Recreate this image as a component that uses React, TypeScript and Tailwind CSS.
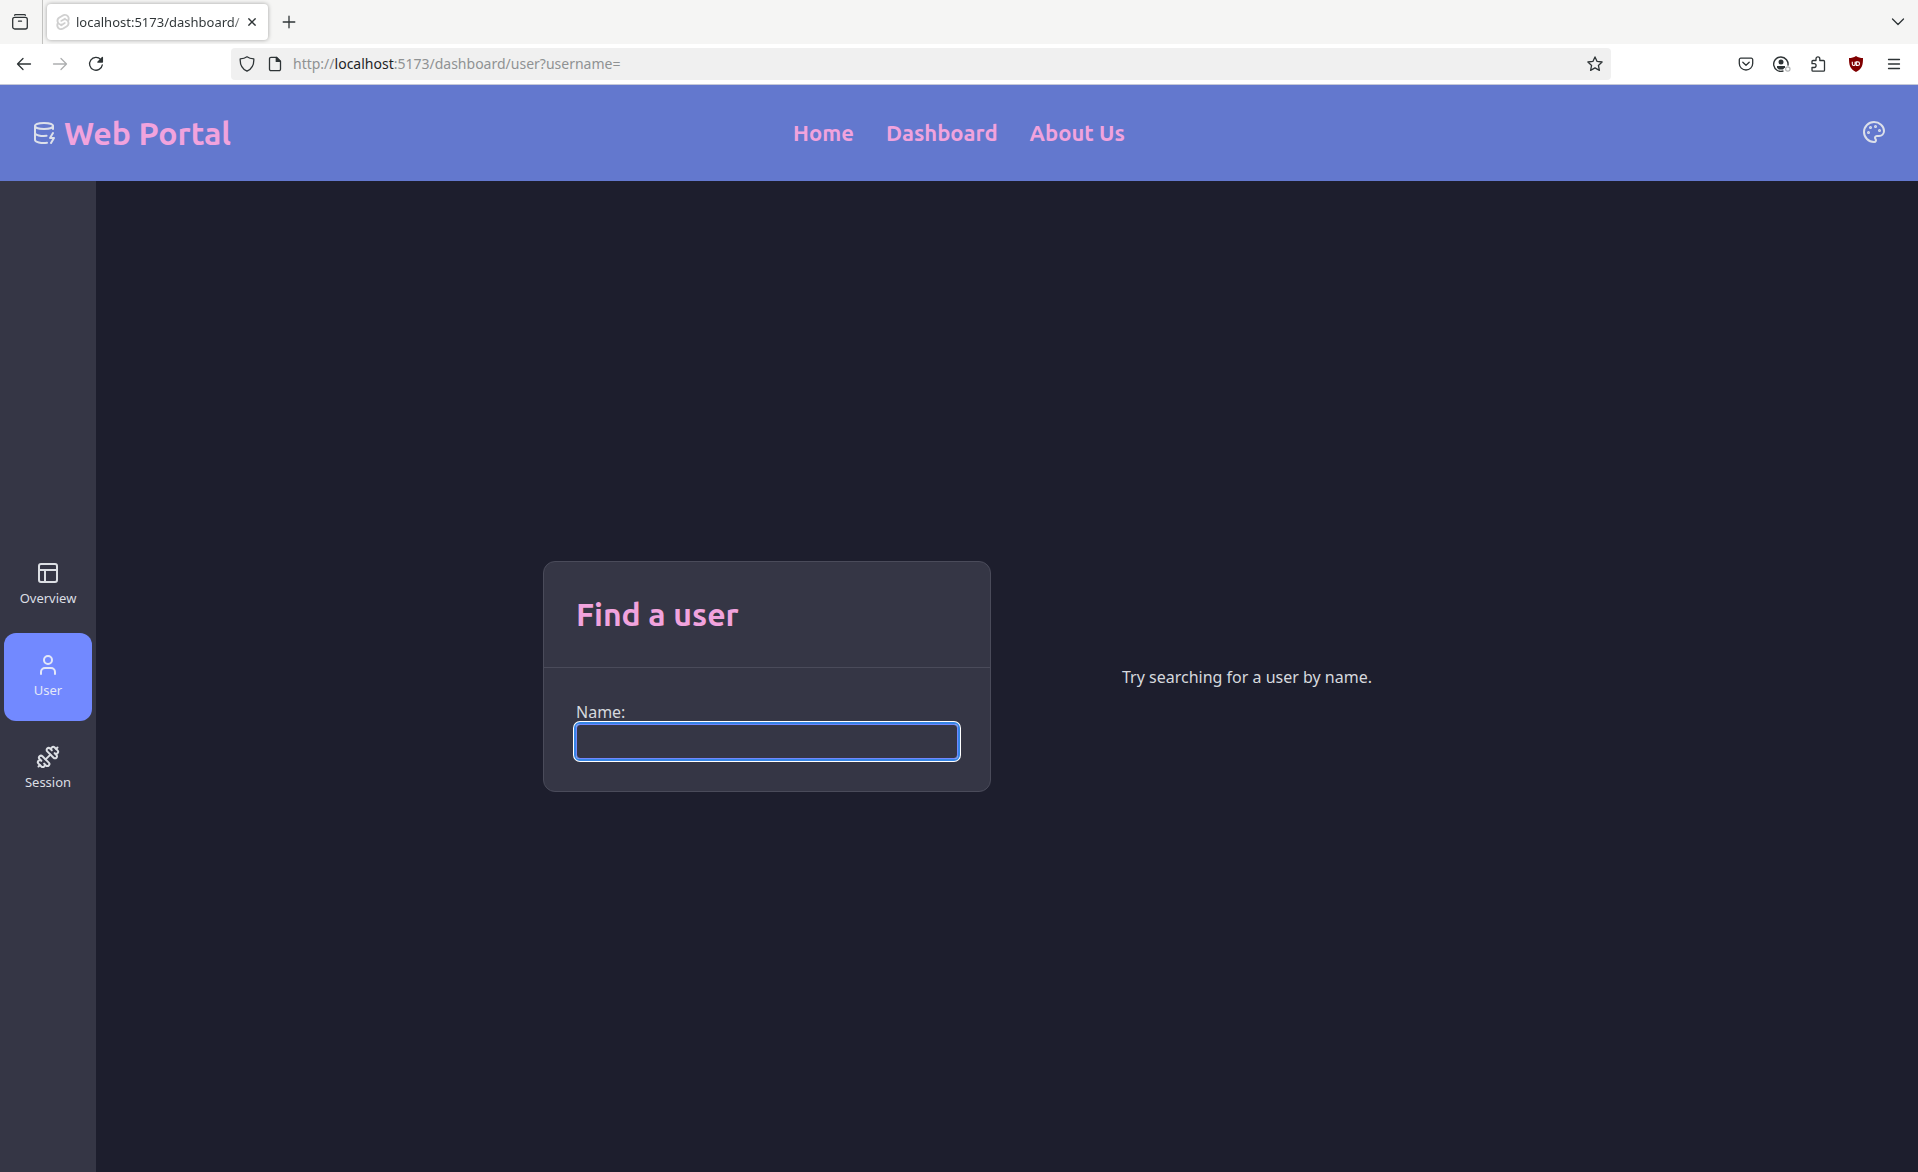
import type { ReactNode } from "react";
import { DatabaseZap, Dumbbell, Palette, PanelsTopLeft, User } from "lucide-react";

const uiFont = "font-['Noto_Sans',sans-serif]";
const headingFont = "font-['Ubuntu','Noto_Sans',sans-serif]";

function Glyph({ children, className = "" }: { children: ReactNode; className?: string }) {
  return (
    <svg
      viewBox="0 0 16 16"
      className={`size-4 shrink-0 ${className}`}
      fill="none"
      stroke="currentColor"
      strokeWidth="1.3"
      strokeLinecap="round"
      strokeLinejoin="round"
      aria-hidden="true"
    >
      {children}
    </svg>
  );
}

function ChromeButton({ label, children, className = "" }: { label: string; children: ReactNode; className?: string }) {
  return (
    <button type="button" aria-label={label} className={`flex size-8 shrink-0 items-center justify-center rounded ${className}`}>
      {children}
    </button>
  );
}

function TabStrip() {
  return (
    <div className="flex h-11 items-center bg-[#f5f5f4]">
      <div className="flex w-[43px] shrink-0 items-center self-stretch border-r border-[#c2c2c0] pl-1">
        <ChromeButton label="Recent browsing">
          <Glyph>
            <path d="M2.6 1.2 C3 .6 3.5 .6 4 .6 H12 C12.5 .6 13 .6 13.400 1.2" />
            <rect x=".7" y="3.400" width="14.600" height="11.600" rx="2" />
            <path d="M6.500 7.200h3" />
          </Glyph>
        </ChromeButton>
      </div>
      <div className="ml-1 flex h-9 w-[221px] items-center rounded bg-white pr-2 pl-2 shadow-[0_0_4px_rgba(0,0,0,0.35)]">
        <svg viewBox="0 0 98 118" className="mr-[5px] size-4 shrink-0" fill="none" aria-hidden="true">
          <path
            fill="#d0d0d0"
            d="M91.8 15.6C80.9-.1 59.2-4.7 43.6 5.2L16.1 22.8C8.6 27.5 3.4 35.2 1.9 43.9c-1.3 7.3-.2 14.8 3.3 21.3-2.4 3.6-4 7.6-4.7 11.8-1.6 8.9.5 18.1 5.7 25.4 11 15.7 32.6 20.3 48.2 10.4l27.5-17.5c7.5-4.7 12.7-12.4 14.2-21.1 1.3-7.3.2-14.8-3.3-21.3 2.4-3.6 4-7.6 4.7-11.8 1.700-9-.4-18.200-5.700-25.500"
          />
          <path
            fill="#fff"
            d="M40.9 103.9c-8.900 2.300-18.200-1.200-23.400-8.700-3.200-4.400-4.400-9.900-3.500-15.300.2-.9.4-1.700.6-2.600l.5-1.600 1.400 1c3.300 2.400 6.900 4.200 10.800 5.400l1 .3-.1 1c-.1 1.400.3 2.900 1.100 4.100 1.600 2.300 4.400 3.400 7.100 2.700.6-.2 1.200-.4 1.700-.7L65.500 72c1.400-.9 2.300-2.200 2.600-3.800.3-1.600-.1-3.300-1-4.600-1.600-2.300-4.400-3.300-7.100-2.600-.6.2-1.200.4-1.700.7l-10.500 6.700c-1.700 1.100-3.600 1.900-5.600 2.400-8.900 2.300-18.200-1.200-23.400-8.700-3.100-4.400-4.400-9.900-3.400-15.300.9-5.200 4.100-9.900 8.600-12.700l27.500-17.500c1.700-1.100 3.600-1.900 5.600-2.500 8.900-2.300 18.200 1.200 23.400 8.700 3.200 4.400 4.400 9.900 3.500 15.300-.2.9-.4 1.700-.7 2.600l-.5 1.600-1.400-1c-3.300-2.400-6.900-4.200-10.800-5.400l-1-.3.1-1c.1-1.400-.3-2.900-1.100-4.100-1.600-2.300-4.400-3.300-7.100-2.600-.6.2-1.200.4-1.700.7L32.400 46.100c-1.400.9-2.300 2.200-2.600 3.800s.1 3.300 1 4.600c1.600 2.300 4.400 3.300 7.100 2.600.6-.2 1.200-.4 1.700-.7l10.500-6.700c1.700-1.100 3.600-1.900 5.600-2.500 8.900-2.300 18.200 1.200 23.400 8.700 3.200 4.400 4.400 9.900 3.500 15.300-.9 5.200-4.100 9.900-8.600 12.700l-27.500 17.500c-1.700 1.100-3.600 1.900-5.600 2.500"
          />
        </svg>
        <span className="min-w-0 flex-1 bg-gradient-to-r from-[#2e3436] from-93% to-[#2e343640] bg-clip-text text-[13px] leading-5 whitespace-nowrap text-transparent">
          localhost:5173/dashboard/
        </span>
        <button type="button" aria-label="Close tab" className="flex size-4 shrink-0 items-center justify-center">
          <svg viewBox="0 0 8 8" className="size-2" fill="none" stroke="#2e3436" strokeWidth="1.400" aria-hidden="true">
            <path d="M.4 .4 7.600 7.600M7.600 .4 .4 7.600" />
          </svg>
        </button>
      </div>
      <ChromeButton label="New tab" className="ml-[5px]">
        <Glyph>
          <path d="M8 2.200v11.600M2.200 8h11.600" />
        </Glyph>
      </ChromeButton>
      <ChromeButton label="List all tabs" className="mr-1 ml-auto">
        <Glyph>
          <path d="M2.500 5 8 10.500 13.500 5" />
        </Glyph>
      </ChromeButton>
    </div>
  );
}

function Toolbar() {
  return (
    <div className="flex h-[41px] items-center border-b border-[#c5c8d8] bg-white pr-2 pl-2">
      <div className="flex w-[223px] shrink-0 gap-1">
        <ChromeButton label="Back">
          <Glyph>
            <path d="M14.500 8H1.500M7 2.500 1.500 8 7 13.500" />
          </Glyph>
        </ChromeButton>
        <ChromeButton label="Forward" className="text-[#adafb0]">
          <Glyph>
            <path d="M1.500 8h13M9 2.500 14.500 8 9 13.500" />
          </Glyph>
        </ChromeButton>
        <ChromeButton label="Reload">
          <Glyph>
            <path d="M14.300 8.800A6.400 6.400 0 1 1 12.800 3.600" />
            <path d="M14.400 1.500v4.600H9.800Z" fill="currentColor" />
          </Glyph>
        </ChromeButton>
      </div>
      <div className="flex h-8 min-w-0 flex-1 items-center rounded bg-[#f0f0f0] pr-2 pl-2">
        <Glyph>
          <path d="M8 .8C6 2.300 3.800 2.800 1.200 2.900 .9 8.800 3.200 12.900 8 15.200c4.800-2.300 7.100-6.400 6.800-12.300C12.200 2.800 10 2.300 8 .8Z" />
        </Glyph>
        <Glyph className="ml-3">
          <path d="M9.500 1.300H4a1.500 1.500 0 0 0-1.500 1.500v10.400A1.500 1.500 0 0 0 4 14.700h8a1.500 1.500 0 0 0 1.500-1.500V5.300Z" />
          <path d="M9.300 1.500v3.900h4Z" fill="currentColor" />
        </Glyph>
        <p className="ml-2.5 flex-1 truncate text-sm text-[#8f9293]">
          http://<span className="text-[#1e2426]">localhost</span>:5173/dashboard/user?username=
        </p>
        <button type="button" aria-label="Bookmark this page">
          <Glyph>
            <path d="m8 .9 2.100 4.500 5 .6-3.700 3.400 1 5L8 11.900l-4.400 2.500 1-5L.9 6l5-.6Z" />
          </Glyph>
        </button>
      </div>
      <div className="ml-[119px] flex shrink-0 gap-1">
        <ChromeButton label="Save to Pocket">
          <Glyph>
            <path d="M2.800 2.200h10.400a1.500 1.500 0 0 1 1.500 1.500V7.500a6.700 6.500 0 0 1-13.400 0V3.700a1.500 1.500 0 0 1 1.500-1.500Z" />
            <path d="M4.800 6.300 8 9.300l3.200-3" />
          </Glyph>
        </ChromeButton>
        <ChromeButton label="Account">
          <svg viewBox="0 0 18 16" className="h-4 w-[18px] shrink-0" fill="none" aria-hidden="true">
            <path d="M10.500 14.900A7.200 7.200 0 1 1 14.900 9.700" stroke="#2e3436" strokeWidth="1.400" />
            <circle cx="8" cy="6" r="2.500" fill="#2e3436" />
            <path d="M4 10h8v1.300l-2 2.200H5.800L4 11.700Z" fill="#2e3436" />
            <circle cx="14.800" cy="13" r="2.200" stroke="#b4b6b7" strokeWidth="1.200" />
          </svg>
        </ChromeButton>
        <ChromeButton label="Extensions">
          <Glyph>
            <path d="M6 4.500V2.800a1.900 1.900 0 0 1 3.800 0v1.700h3.700a1 1 0 0 1 1 1v8.700a1 1 0 0 1-1 1H3a1 1 0 0 1-1-1v-2.700h2.200a1.700 1.700 0 0 0 0-3.800H2V5.500a1 1 0 0 1 1-1Z" />
          </Glyph>
        </ChromeButton>
        <ChromeButton label="uBlock Origin" className="ml-0.5">
          <svg viewBox="0 0 16 16" className="size-4 shrink-0" fill="none" aria-hidden="true">
            <path d="M8 0C5.800 1.600 3.500 2 1 2c0 7.500.8 10.500 7 14 6.200-3.500 7-6.500 7-14-2.500 0-4.800-.4-7-2Z" fill="#800000" />
            <path d="M4.300 5.800v2.300a1.400 1.400 0 0 0 2.800 0V5.800M8.300 5.900v3.500h1.500a1.700 1.700 0 0 0 0-3.500Z" stroke="#fff" strokeWidth="1.100" />
          </svg>
        </ChromeButton>
        <ChromeButton label="Open menu" className="ml-0.5">
          <Glyph>
            <path d="M2.500 3.500h11M2.500 8h11M2.500 12.500h11" />
          </Glyph>
        </ChromeButton>
      </div>
    </div>
  );
}

function SiteHeader() {
  return (
    <header className="grid h-24 grid-cols-[1fr_auto_1fr] items-center bg-[#6378ce] px-8 text-[#dce0ea]">
      <a href="#home" className="flex items-center gap-2 justify-self-start">
        <DatabaseZap className="size-6" />
        <span className={`${headingFont} text-[32px] leading-10 font-semibold text-[#f1a3dd]`}>Web Portal</span>
      </a>
      <nav className={`${headingFont} flex gap-8 text-[22px] leading-8 font-semibold text-[#f1a3dd]`}>
        <a href="#home">Home</a>
        <a href="#dashboard">Dashboard</a>
        <a href="#about">About Us</a>
      </nav>
      <button type="button" aria-label="Change theme" className="justify-self-end pb-0.5">
        <Palette className="size-6" />
      </button>
    </header>
  );
}

const sections = [
  { label: "Overview", icon: PanelsTopLeft, active: false },
  { label: "User", icon: User, active: true },
  { label: "Session", icon: Dumbbell, active: false },
];

function Sidebar() {
  return (
    <nav className="flex w-24 shrink-0 flex-col justify-center gap-1 bg-[#353645] p-1">
      {sections.map(({ label, icon: Icon, active }) => (
        <a
          key={label}
          href={`#${label.toLowerCase()}`}
          aria-current={active ? "page" : undefined}
          className={`flex aspect-square flex-col items-center justify-center gap-0.5 rounded-xl text-[13px] leading-[22px] ${
            active ? "bg-[#7289ff] text-[#e4e8f8]" : "text-[#dcdfe4]"
          }`}
        >
          <Icon className="size-6" />
          {label}
        </a>
      ))}
    </nav>
  );
}

function FindUserCard() {
  return (
    <section className="rounded-xl border border-[#4a4b5a] bg-[#353645]">
      <h1 className={`${headingFont} border-b border-[#4a4b5a] p-8 text-[32px] leading-[41px] font-semibold text-[#f1a3dd]`}>
        Find a user
      </h1>
      <form className="flex flex-col p-8">
        <label htmlFor="username" className="leading-6">
          Name:
        </label>
        <input
          id="username"
          name="username"
          type="text"
          className="h-[35px] rounded border border-[#7287ff] bg-[#353645] px-2 shadow-[0_0_0_3px_#ffffff] outline-2 outline-[#3584e4]"
        />
      </form>
    </section>
  );
}

export default function App() {
  return (
    <div className={`${uiFont} flex min-h-screen flex-col bg-[#1d1e2d] text-[#2e3436]`}>
      <TabStrip />
      <Toolbar />
      <SiteHeader />
      <div className="flex flex-1 text-base text-[#d6d9de]">
        <Sidebar />
        <main className="flex flex-1 items-center justify-center">
          <div className="grid w-full max-w-[928px] grid-cols-2 items-center gap-8">
            <FindUserCard />
            <p className="text-center">Try searching for a user by name.</p>
          </div>
        </main>
      </div>
    </div>
  );
}
